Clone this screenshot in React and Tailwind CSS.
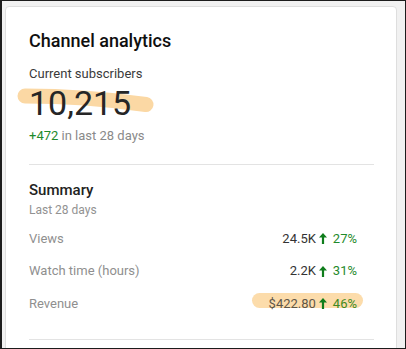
import React from "react";

function Arrow() {
  return (
    <svg width="8" height="11" viewBox="0 0 8 11" className="mx-[3px] mr-[6px] shrink-0">
      <path d="M4 0 L0 4.6 H2.9 V11 H5.1 V4.6 H8 Z" fill="#0f7d1c" />
    </svg>
  );
}

function Row({ label, value, pct, highlight }) {
  return (
    <div className="flex items-center justify-between h-[18px] leading-[18px] text-[13px]">
      <span className="text-[#8f8f8f]">{label}</span>
      <div className="relative flex items-center mr-[17px]">
        {highlight && (
          <div className="absolute left-[-17px] right-[-6px] top-[-2px] h-[15px] rounded-full bg-[#fcdcab]" />
        )}
        <span className={"relative " + (highlight ? "text-[#5e5648]" : "text-[#333333]")}>{value}</span>
        <span className="relative flex items-center">
          <Arrow />
        </span>
        <span className={"relative " + (highlight ? "text-[#3f8a22]" : "text-[#1f8a2c]")}>{pct}</span>
      </div>
    </div>
  );
}

export default function App() {
  return (
    <div
      className="w-[406px] h-[349px] overflow-hidden bg-[#f1f1f1] border-[#1c1c1c] border-t border-r border-b border-l-2 pt-[5px] pl-[3px] pr-[8px]"
      style={{ fontFamily: "Roboto, 'Noto Sans', sans-serif" }}
    >
      <div className="bg-white border border-[#dedede] rounded-[4px] h-[400px] pl-[23px] pr-[22px] pt-[21.6px]">
        <div className="text-[18px] leading-[24px] font-medium text-[#0f0f0f]">Channel analytics</div>
        <div className="mt-[12px] text-[13px] leading-[18px] text-[#3a3a3a]">Current subscribers</div>
        <div className="relative h-[40px]">
          <svg
            className="absolute left-[-14px] top-0"
            width="150"
            height="40"
            viewBox="0 0 150 40"
          >
            <path
              d="M10 13 Q70 13 131 21.5"
              stroke="#fbd8a4"
              strokeWidth="15"
              strokeLinecap="round"
              fill="none"
            />
          </svg>
          <div className="relative text-[34px] leading-[40px] font-normal text-[#262626]">10,215</div>
        </div>
        <div className="mt-[4px] text-[13px] leading-[18px]">
          <span className="text-[#1f8a2c]">+472</span>
          <span className="text-[#8a8a8a]"> in last 28 days</span>
        </div>
        <div className="mt-[19px] h-px bg-[#e3e3e3]" />
        <div className="mt-[15.6px] text-[15px] leading-[20px] font-medium text-[#222222]">Summary</div>
        <div className="mt-[1.6px] text-[12px] leading-[16px] text-[#929292]">Last 28 days</div>
        <div className="mt-[12px] flex flex-col gap-[14.4px]">
          <Row label="Views" value="24.5K" pct="27%" />
          <Row label="Watch time (hours)" value="2.2K" pct="31%" />
          <Row label="Revenue" value="$422.80" pct="46%" highlight />
        </div>
        <div className="mt-[26px] h-px bg-[#e3e3e3]" />
      </div>
    </div>
  );
}
